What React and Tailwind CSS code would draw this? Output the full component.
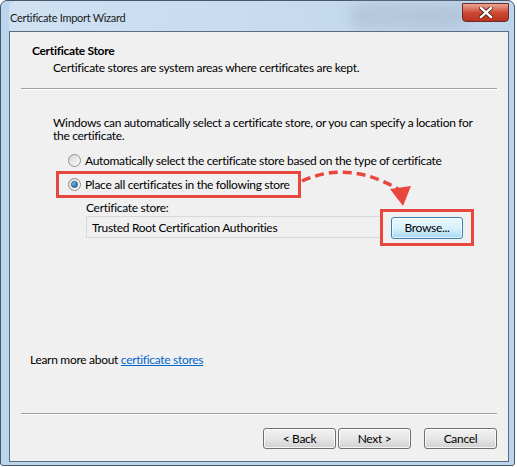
import React from 'react';

const font = { fontFamily: 'Lato, "Noto Sans", sans-serif', letterSpacing: '-0.3px' };

const Radio = ({ checked }) => (
  <span className="relative flex h-[13px] w-[13px] shrink-0 items-center justify-center rounded-full border border-[#8e8f8f] bg-gradient-to-br from-[#d6d6d6] to-[#fcfcfc]">
    {checked && (
      <span className="h-[7px] w-[7px] rounded-full border border-[#1a5a8c] bg-gradient-to-br from-[#7ccaf3] to-[#1b63a4]" />
    )}
  </span>
);

const WinButton = ({ children, focused }) => (
  <button
    className={
      focused
        ? 'h-[22px] w-[72px] rounded-[3px] border border-[#3c7fb1] bg-gradient-to-b from-[#eaf6fd] via-[#d9f0fc] to-[#a7d9f5] text-[12px] text-black shadow-[inset_0_0_0_1px_#ffffffb0]'
        : 'h-[21px] w-[73px] rounded-[3px] border border-[#707070] bg-gradient-to-b from-[#f2f2f2] via-[#e6e6e6] to-[#d0d0d0] text-[12px] text-black shadow-[inset_0_0_0_1px_#ffffffc0]'
    }
  >
    {children}
  </button>
);

export default function App() {
  return (
    <div className="relative h-[467px] w-[517px] overflow-hidden bg-white" style={font}>
      <div className="flex h-[466px] w-[515px] flex-col rounded-t-[7px] rounded-b-[3px] border border-[#4a5768] bg-[#bcd5ee] pb-[3px] pl-[8px] pr-[5px]">
        {/* title bar */}
        <div className="relative flex h-[30px] shrink-0 items-start justify-between rounded-t-[6px] bg-gradient-to-r from-[#cfe1f3] via-[#c7dcf0] to-[#bed4ea]">
          <div className="pointer-events-none absolute left-[340px] top-[2px] h-[26px] w-[120px] rounded-full bg-[#9fb2c6] opacity-40 blur-[6px]" />
          <span className="relative pl-[1px] pt-[9px] text-[11px] leading-[15px] text-[#1a1a1a]">Certificate Import Wizard</span>
          <div className="relative mt-[2px] flex h-[19px] w-[47px] items-center justify-center rounded-b-[4px] border border-[#6b2c24] bg-gradient-to-b from-[#e8a596] via-[#cf4a34] to-[#b8321f]">
            <svg width="14" height="11" viewBox="0 0 14 11">
              <path d="M2 1 L12 10 M12 1 L2 10" stroke="#3a1a14" strokeWidth="4" strokeLinecap="square" />
              <path d="M2 1 L12 10 M12 1 L2 10" stroke="#ffffff" strokeWidth="2.4" strokeLinecap="square" />
            </svg>
          </div>
        </div>

        {/* client area */}
        <div className="relative flex min-h-0 flex-1 flex-col overflow-hidden border border-[#5b6a7d] bg-[#f0f0f0] pb-[12px] text-[12px] text-black">
          <div className="pl-[22px] pt-[11px] font-bold leading-[15px]">Certificate Store</div>
          <div className="mt-[2px] pl-[43px] leading-[15px]">Certificate stores are system areas where certificates are kept.</div>
          <div className="mx-[11px] mt-[13px] border-t border-b border-t-[#a0a0a0] border-b-white" />

          <div className="mt-[26px] pl-[43px] pr-[22px] leading-[13px]">
            Windows can automatically select a certificate store, or you can specify a location for the certificate.
          </div>

          <div className="mt-[11px] flex items-center gap-[4px] pl-[58px] leading-[15px]">
            <Radio />
            <span>Automatically select the certificate store based on the type of certificate</span>
          </div>

          <div className="ml-[46px] mt-[3px] flex w-[245px] items-center gap-[4px] border-[3px] border-[#e8473e] py-[3px] pl-[9px] leading-[15px]">
            <Radio checked />
            <span className="whitespace-nowrap">Place all certificates in the following store</span>
          </div>

          <div className="mt-[2px] pl-[76px] leading-[15px]">Certificate store:</div>
          <div className="mt-[-7px] flex items-center pl-[76px]">
            <div className="flex h-[22px] w-[295px] items-center border border-[#d9d9d9] bg-[#f0f0f0] pl-[5px] leading-[15px]">
              Trusted Root Certification Authorities
            </div>
            <div className="ml-[-1px] mt-[1px] flex items-center justify-center border-[3px] border-[#e8473e] px-[8px] pb-[4px] pt-[5px]">
              <WinButton focused>Browse...</WinButton>
            </div>
          </div>

          {/* annotation arrow */}
          <svg className="pointer-events-none absolute left-[288px] top-[132px]" width="120" height="50" viewBox="0 0 120 50">
            <path d="M4 17 Q 50 -4, 100 25" fill="none" stroke="#e8473e" strokeWidth="3.5" strokeDasharray="9 5" />
            <path d="M92 25 L113 22 L105 42 Z" fill="#e8473e" />
          </svg>

          <div className="mt-[106px] pl-[20px] leading-[15px]">
            Learn more about{' '}
            <span className="text-[#0066cc] underline">certificate stores</span>
          </div>

          <div className="mx-[11px] mt-auto border-t border-b border-t-[#a0a0a0] border-b-white" />

          <div className="mt-[13px] flex justify-end pr-[11px]">
            <WinButton>&lt; Back</WinButton>
            <div className="w-[2px]" />
            <WinButton>Next &gt;</WinButton>
            <div className="w-[13px]" />
            <WinButton>Cancel</WinButton>
          </div>
        </div>
      </div>
    </div>
  );
}
